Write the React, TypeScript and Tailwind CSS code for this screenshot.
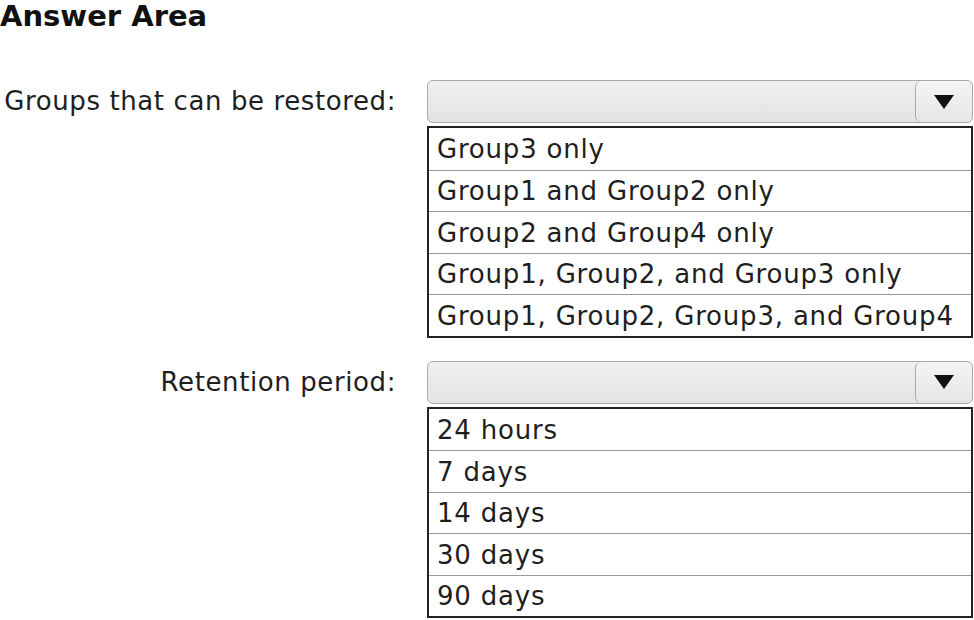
import React from "react";

const groups = [
  "Group3 only",
  "Group1 and Group2 only",
  "Group2 and Group4 only",
  "Group1, Group2, and Group3 only",
  "Group1, Group2, Group3, and Group4",
];

const retention = ["24 hours", "7 days", "14 days", "30 days", "90 days"];

function Dropdown({ options }: { options: string[] }) {
  return (
    <div className="flex flex-col">
      <div className="h-[43px] flex rounded-[6px] border border-[#a9a9a9] bg-gradient-to-b from-[#efefef] to-[#e3e3e3]">
        <div className="flex-1" />
        <div className="w-[57px] flex items-center justify-center rounded-[6px] border-l border-[#a9a9a9] bg-gradient-to-b from-[#f4f4f4] to-[#e6e6e6]">
          <svg width="22" height="16" viewBox="0 0 22 16">
            <polygon points="1,1 21,1 11,15" fill="#111" />
          </svg>
        </div>
      </div>
      <ul className="mt-[3px] border-2 border-[#222] bg-white">
        {options.map((opt, i) => (
          <li
            key={opt}
            className={`h-[41.5px] flex items-center pl-[8px] pt-[2px] text-[26px] tracking-[0.8px] text-[#1e1e1e] ${
              i > 0 ? "border-t border-[#9a9a9a]" : ""
            }`}
          >
            {opt}
          </li>
        ))}
      </ul>
    </div>
  );
}

export default function App() {
  return (
    <div className="w-[974px] h-[620px] bg-white overflow-hidden font-['DejaVu_Sans',Verdana,sans-serif] text-[#1e1e1e]">
      <div className="h-[80px]">
        <h1 className="text-[29px] font-bold leading-[32px] text-[#111]">Answer Area</h1>
      </div>
      <div className="grid grid-cols-[427px_546px] gap-y-[23px]">
        <div className="h-[43px] flex items-center justify-end pr-[31px] text-[26px] tracking-[0.6px] whitespace-nowrap">
          Groups that can be restored:
        </div>
        <Dropdown options={groups} />
        <div className="h-[43px] flex items-center justify-end pr-[31px] text-[26px] tracking-[0.6px] whitespace-nowrap">
          Retention period:
        </div>
        <Dropdown options={retention} />
      </div>
    </div>
  );
}
